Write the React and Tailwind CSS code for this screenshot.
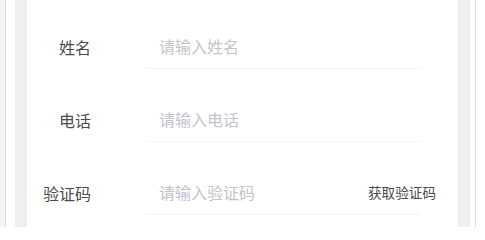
const fields = [
  { label: '姓名', placeholder: '请输入姓名' },
  { label: '电话', placeholder: '请输入电话' },
  { label: '验证码', placeholder: '请输入验证码', code: true },
];

const FormRow = ({ label, placeholder, code }) => {
  return (
    <div className="flex items-center h-[45px] mb-[28px]">
      <div className="w-[64px] text-right text-[16px] text-[#4a4a4a]">{label}</div>
      <div className="relative ml-[52px] w-[280px] h-full flex items-center border-b border-[#f3f4f6] rounded-[4px]">
        <input
          className="w-full h-full pl-[16px] bg-transparent outline-none text-[16px] text-[#333] placeholder:text-[#c0c4cc]"
          placeholder={placeholder}
        />
        {code && (
          <span className="absolute right-[-13px] top-1/2 -translate-y-1/2 text-[13.6px] text-[#4a4a4a] whitespace-nowrap">
            获取验证码
          </span>
        )}
      </div>
    </div>
  );
};

const App = () => {
  return (
    <div
      className="flex w-[485px] h-[227px] bg-white overflow-hidden"
      style={{ fontFamily: '"Noto Sans CJK SC", "Noto Sans", sans-serif' }}
    >
      <div className="w-[5px] bg-[#f2f3f3] border-r border-[#dcdcdc] box-content" />
      <div className="w-[9px] bg-white" />
      <div className="w-[12px] bg-[#efefef]" />
      <div className="w-[431px] bg-white pt-[24px]">
        {fields.map((f) => (
          <FormRow key={f.label} {...f} />
        ))}
      </div>
      <div className="w-[12px] bg-[#efefef]" />
      <div className="w-[5px] bg-white" />
      <div className="w-[1px] bg-[#dcdcdc]" />
      <div className="flex-1 bg-white" />
    </div>
  );
};

export default App;
